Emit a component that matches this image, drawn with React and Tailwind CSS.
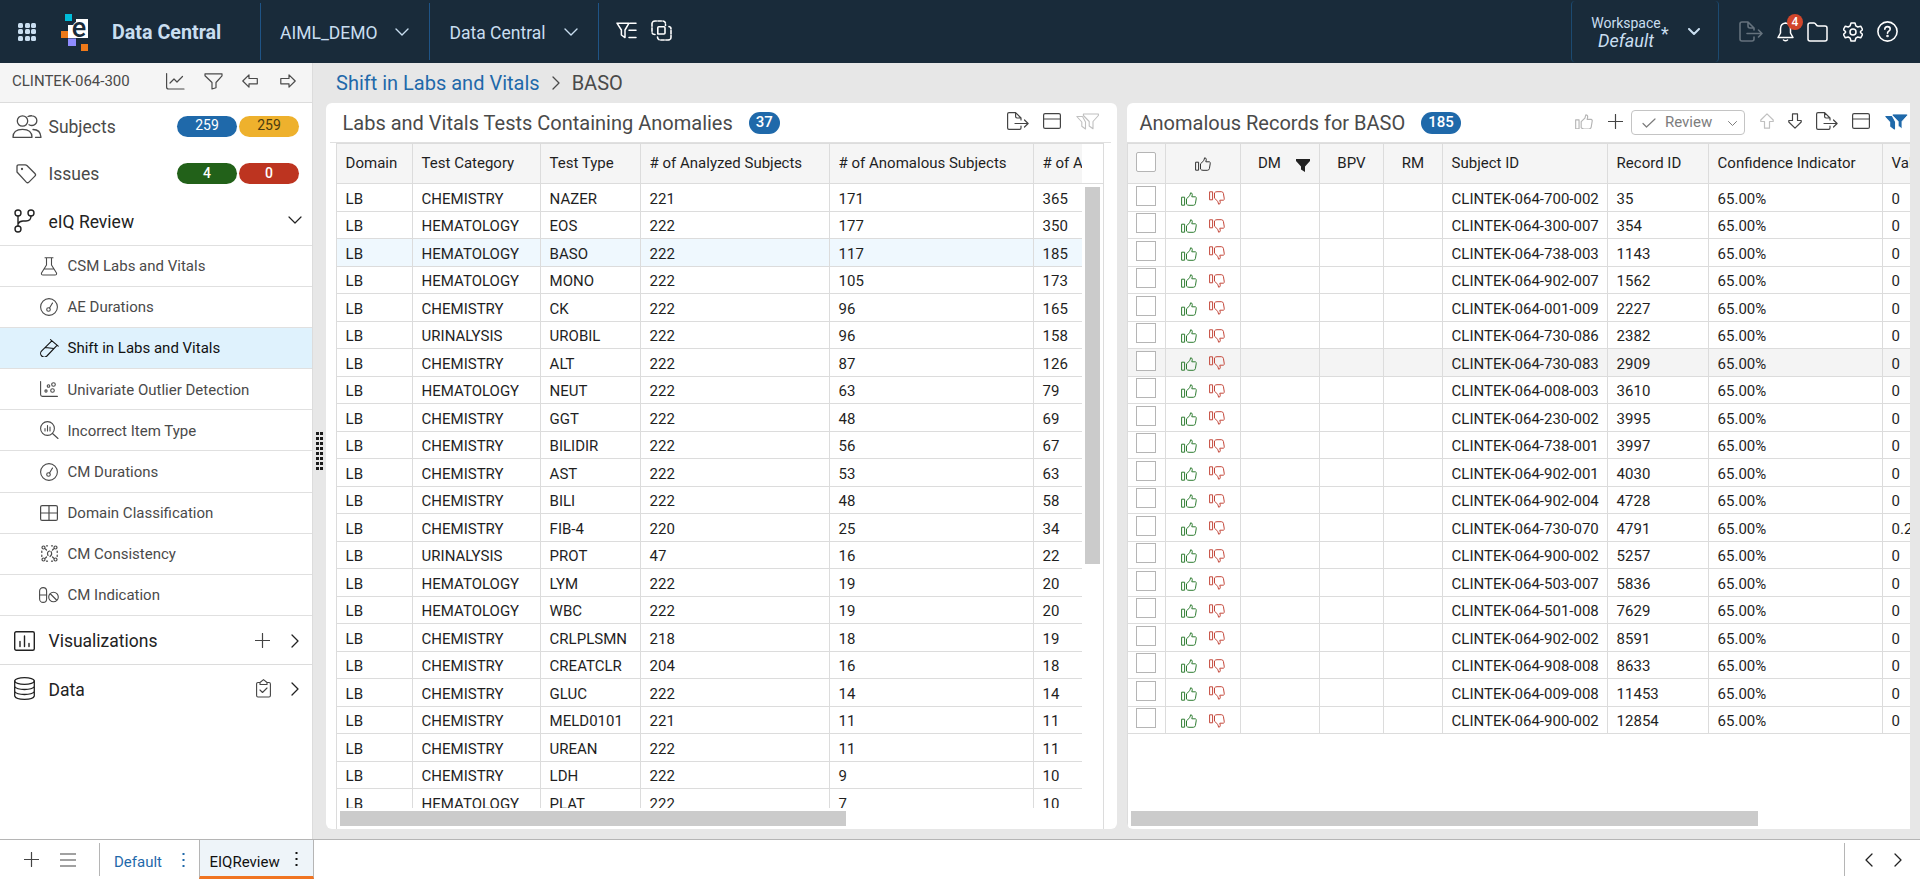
const subjects = [
    ['CHEMISTRY', 'NAZER', 221, 171, 365],
    ['HEMATOLOGY', 'EOS', 222, 177, 350],
    ['HEMATOLOGY', 'BASO', 222, 117, 185],
    ['HEMATOLOGY', 'MONO', 222, 105, 173],
    ['CHEMISTRY', 'CK', 222, 96, 165],
    ['URINALYSIS', 'UROBIL', 222, 96, 158],
    ['CHEMISTRY', 'ALT', 222, 87, 126],
    ['HEMATOLOGY', 'NEUT', 222, 63, 79],
    ['CHEMISTRY', 'GGT', 222, 48, 69],
    ['CHEMISTRY', 'BILIDIR', 222, 56, 67],
    ['CHEMISTRY', 'AST', 222, 53, 63],
    ['CHEMISTRY', 'BILI', 222, 48, 58],
    ['CHEMISTRY', 'FIB-4', 220, 25, 34],
    ['URINALYSIS', 'PROT', 47, 16, 22],
    ['HEMATOLOGY', 'LYM', 222, 19, 20],
    ['HEMATOLOGY', 'WBC', 222, 19, 20],
    ['CHEMISTRY', 'CRLPLSMN', 218, 18, 19],
    ['CHEMISTRY', 'CREATCLR', 204, 16, 18],
    ['CHEMISTRY', 'GLUC', 222, 14, 14],
    ['CHEMISTRY', 'MELD0101', 221, 11, 11],
    ['CHEMISTRY', 'UREAN', 222, 11, 11],
    ['CHEMISTRY', 'LDH', 222, 9, 10],
    ['HEMATOLOGY', 'PLAT', 222, 7, 10],
];

const records = [
    ['700-002', 35],
    ['300-007', 354],
    ['738-003', 1143],
    ['902-007', 1562],
    ['001-009', 2227],
    ['730-086', 2382],
    ['730-083', 2909],
    ['008-003', 3610],
    ['230-002', 3995],
    ['738-001', 3997],
    ['902-001', 4030],
    ['902-004', 4728],
    ['730-070', 4791, '0.25'],
    ['900-002', 5257],
    ['503-007', 5836],
    ['501-008', 7629],
    ['902-002', 8591],
    ['908-008', 8633],
    ['009-008', 11453],
    ['900-002', 12854],
];

const Icon = ({ w = 20, h = 20, className = '', sw = 1.2, children }) => (
    <svg
        width={w}
        height={h}
        viewBox={`0 0 ${w} ${h}`}
        fill="none"
        stroke="currentColor"
        strokeWidth={sw}
        strokeLinecap="round"
        strokeLinejoin="round"
        className={`shrink-0 ${className}`}
    >
        {children}
    </svg>
);

const ThumbUp = ({ w = 16, className }) => (
    <svg width={w} height={w * 0.875} viewBox="0 0 16 14" fill="none" stroke="currentColor" strokeWidth="1" strokeLinejoin="round" className={`shrink-0 ${className}`}>
        <path d="M.6 5.2h3v8h-3zM5.5 6.8 8.8 3.6 9.6.8q1.7 0 1.7 1.8L10.8 4.8h3.6q1.3.4.8 2L14.4 11.6q-.4 1.7-2 1.7H8q-1.6 0-2.5-1.2z" />
    </svg>
);

const ThumbDown = ({ w = 16, className }) => (
    <svg width={w} height={w * 0.875} viewBox="0 0 16 14" fill="none" stroke="currentColor" strokeWidth="1" strokeLinejoin="round" className={`shrink-0 ${className}`}>
        <path d="M.6.8h3v8h-3zM5.5 7.2 8.8 10.4 9.6 13.2q1.7 0 1.7-1.8L10.8 9.2h3.6q1.3-.4.8-2L14.4 2.4Q14 .7 12.4.7H8Q6.4.7 5.5 1.9z" />
    </svg>
);

const ChevronDown = ({ className, sw = 1.4 }) => (
    <Icon w={14} h={8} sw={sw} className={className}>
        <path d="M1 1l6 6 6-6" />
    </Icon>
);

const ChevronRight = ({ className }) => (
    <Icon w={8} h={14} sw={1.3} className={className}>
        <path d="M1 1l6 6-6 6" />
    </Icon>
);

const Plus = ({ className }) => (
    <Icon w={15} h={15} className={className}>
        <path d="M7.5.5v14M.5 7.5h14" />
    </Icon>
);

const ExportIcon = ({ className }) => (
    <Icon w={22} h={18} className={className}>
        <path d="M14 14v2q0 1.4-1.4 1.4H2Q.6 17.4.6 16V2Q.6.6 2 .6h6.6L14 6v2M8.6.8v3.8Q8.6 6 10 6h4M8 11.5h13M17.5 8l3.6 3.5-3.6 3.5" />
    </Icon>
);

const LayoutIcon = ({ className }) => (
    <Icon w={18} h={16} className={className}>
        <rect x=".6" y=".6" width="16.8" height="14.8" rx="1.5" />
        <path d="M.6 6h16.8" />
    </Icon>
);

const FiltersIcon = ({ className, fill = 'none' }) => (
    <svg width="23" height="17" viewBox="0 0 23 17" fill={fill} stroke="currentColor" strokeWidth="1.1" strokeLinejoin="round" className={`shrink-0 ${className}`}>
        <path d="M6.5 3.5H.8l5 5.5v4.2l3.7 2.8V9z" />
        <path d="M7.4 1h15v1.5L17 8.5v7.3l-3.8-2.8V8.5L7.4 2.5z" stroke={fill === 'none' ? 'currentColor' : '#fff'} strokeWidth={fill === 'none' ? 1.1 : 0.8} />
    </svg>
);

const AppHeader = () => (
    <header className="flex h-[63px] shrink-0 items-center bg-[#192b3a] text-[#c9def0]">
        <div className="ml-[18px] grid grid-cols-3 gap-[1.5px]">
            {Array.from({ length: 9 }, (_, i) => (
                <span key={i} className="size-[5px] rounded-[1.5px] bg-[#c9def0]" />
            ))}
        </div>
        <svg width="27" height="37" viewBox="0 0 27 37" className="ml-[25px] mt-[2px] shrink-0">
            <path d="M4 0h7v7H4z" fill="#00bcd9" />
            <path d="M15 5h12v19H7V11h8z" fill="#fff" />
            <path d="M0 17h7v7H0zM20 30h7v7h-7z" fill="#ef7a1a" />
            <path d="M7 24.5h8V32H7z" fill="#8f8cff" />
            <text x="18" y="23" textAnchor="middle" fontSize="27" fontWeight="500" fontFamily="Roboto, sans-serif" fill="#192b3a" stroke="#fff" strokeWidth="1.5" paintOrder="stroke">e</text>
        </svg>
        <span className="ml-6 w-[148px] pt-[3px] text-[19.7px] font-bold">Data Central</span>
        <div className="flex h-[57px] w-[169px] items-center justify-between border-l border-[#1f5486] pr-5 pl-[19px] text-[17.5px]">
            <span className="pt-[3px]">AIML_DEMO</span> <ChevronDown />
        </div>
        <div className="flex h-[57px] w-[169px] items-center justify-between border-l border-[#1f5486] pr-5 pl-[19.5px] text-[17.5px]">
            <span className="pt-[3px]">Data Central</span> <ChevronDown />
        </div>
        <div className="flex h-[57px] items-center border-l border-[#1f5486] pb-[2px] pl-[17px] text-white">
            <Icon w={21} h={17} sw={1.5}>
                <path d="M1 1.2h12L9 8v7.6L5.4 13V8zM14 1.2h6M13 8.2h7M13 15.6h7" />
            </Icon>
            <Icon w={21} h={21} sw={1.6} className="ml-[14px]">
                <path d="M4 14.5q-3 0-3-2.5V4q0-3 3-3h7.5q3 0 3 3v1.5" strokeDasharray="3.5 1.5" />
                <path d="M6.5 17q0 3 3 3H17q3 0 3-3V9q0-2.5-3-2.5" strokeDasharray="3.5 1.5" />
                <path d="M6.8 14V7.8q0-1 1-1H13q1 0 1 1V13q0 1-1 1z" />
            </Icon>
        </div>
        <div className="ml-auto flex h-[61px] w-[148px] items-center rounded border-x border-[#1c4a70] pl-[19px]">
            <div className="w-[70px] text-center leading-[17px]">
                <div className="text-[14px]">Workspace</div>
                <div className="text-[18px] italic">Default</div>
            </div>
            <span className="mt-[3px] w-[10px] text-[18px]">*</span>
            <Icon w={12} h={8} sw={2} className="ml-[17px]">
                <path d="M1 1l5 5 5-5" />
            </Icon>
        </div>
        <div className="flex items-center pr-[22px] pl-5 text-white">
            <Icon w={24} h={21} sw={1.6} className="text-[#65727d]">
                <path d="M15 16v2q0 2-2 2H3q-2 0-2-2V3q0-2 2-2h6l6 6v2M9 1v4q0 2 2 2h4M8 12.5h15M19.5 9l3.5 3.5-3.5 3.5" />
            </Icon>
            <div className="relative ml-[14px]">
                <Icon w={17} h={20} sw={1.5}>
                    <path d="M8.5 1Q3.5 1.5 3.5 7v4L1 15.5h15L13.5 11V7Q13.5 1.5 8.5 1zM6.5 18q2 1.5 4 0" />
                </Icon>
                <span className="absolute -top-[8px] left-[10px] flex size-4 items-center justify-center rounded-full bg-[#d1462b] text-[12px] font-medium">4</span>
            </div>
            <Icon w={21} h={20} sw={1.5} className="ml-[13px]">
                <path d="M1 3q0-2 2-2h4q1 0 2 1.5T11.5 4H18q2 0 2 2v11q0 2-2 2H3q-2 0-2-2z" />
            </Icon>
            <Icon w={20} h={20} sw={1.5} className="ml-[15px]">
                <path d="M8 1h4l.8 2.8 2 1.2 2.9-.8 1.9 3.3L17.5 9.5v1l2.1 2-1.9 3.3-2.9-.8-2 1.2L12 19H8l-.8-2.8-2-1.2-2.9.8L.4 12.5l2.1-2v-1l-2.1-2 1.9-3.3 2.9.8 2-1.2z" />
                <circle cx="10" cy="10" r="3" />
            </Icon>
            <Icon w={21} h={21} sw={1.6} className="ml-[14px]">
                <circle cx="10.5" cy="10.5" r="9.6" />
                <path d="M7.8 8.3q0-2.7 2.7-2.7t2.7 2.4q0 1.3-1.4 2.2t-1.3 2.1" />
                <circle cx="10.5" cy="15" r=".5" />
            </Icon>
        </div>
    </header>
);

const gauge = (
    <Icon w={18} h={18} sw={1.1}>
        <circle cx="9" cy="9" r="8.4" />
        <circle cx="8.5" cy="11.5" r="1.8" />
        <path d="M12.5 5 9.5 10" />
    </Icon>
);

const reviewItems = [
    {
        label: 'CSM Labs and Vitals',
        icon: (
            <Icon w={18} h={19} sw={1.1}>
                <path d="M5 .8h8M6.5 1v7L1.5 16q-.5 2 1.5 2h12q2 0 1.5-2l-5-8V1M4 12h10" />
            </Icon>
        ),
    },
    { label: 'AE Durations', icon: gauge },
    {
        label: 'Shift in Labs and Vitals',
        active: true,
        icon: (
            <Icon w={19} h={18} sw={1.1}>
                <path d="M10.5.6l7.7 6.6M11.8 1.8 1.7 11.8a3.6 3.6 0 0 0 5.2 5.2L17 6.3M5.3 8.5l8.7 1" />
            </Icon>
        ),
    },
    {
        label: 'Univariate Outlier Detection',
        icon: (
            <Icon w={18} h={16} sw={1.1}>
                <path d="M.6.6v13q0 1.8 1.8 1.8h15" />
                <circle cx="8.5" cy="5" r="1.3" />
                <circle cx="13.5" cy="3.5" r="1.8" />
                <circle cx="6" cy="10" r="1.1" />
                <circle cx="12.5" cy="9.5" r="1.8" />
            </Icon>
        ),
    },
    {
        label: 'Incorrect Item Type',
        icon: (
            <Icon w={19} h={18} sw={1.1}>
                <circle cx="7.5" cy="7.5" r="6.9" />
                <path d="M12.5 12.5l5.5 5M5 7.5V10M7.5 4.5V10M10 6v4" />
            </Icon>
        ),
    },
    { label: 'CM Durations', icon: gauge },
    {
        label: 'Domain Classification',
        icon: (
            <Icon w={18} h={16} sw={1.2}>
                <rect x=".6" y=".6" width="16.8" height="14.8" rx="1.5" />
                <path d="M9 .6v14.8M.6 8h16.8" />
            </Icon>
        ),
    },
    {
        label: 'CM Consistency',
        icon: (
            <Icon w={17} h={17} sw={1.2}>
                <circle cx="2.5" cy="2.5" r="1.5" />
                <circle cx="14.5" cy="2.5" r="1.5" />
                <circle cx="2.5" cy="14.5" r="1.5" />
                <circle cx="14.5" cy="14.5" r="1.5" />
                <path d="M.8 6v1.5M16.2 6v1.5M.8 10v1.5M16.2 10v1.5M5.5.8h1M10.5.8h1M5.5 16.2h1M10.5 16.2h1M4.5 4 5.5 5M12.5 4 11.5 5M4.5 13 5.5 12M12.5 13 11.5 12M7 10.5Q5.5 7 8.5 6M10 6.5q1.7 3-1 5" />
            </Icon>
        ),
    },
    {
        label: 'CM Indication',
        icon: (
            <Icon w={20} h={16} sw={1.1}>
                <rect x=".6" y=".6" width="7" height="14.8" rx="3.5" />
                <path d="M.6 8h7M11.5 7l6 6" />
                <circle cx="14.5" cy="10" r="4.8" />
            </Icon>
        ),
    },
];

const Pill = ({ className, children }) => (
    <span className={`flex h-[21px] w-[60px] items-center justify-center rounded-full text-[14px] ${className}`}>{children}</span>
);

const Sidebar = () => (
    <aside className="w-[313px] shrink-0 border-r border-[#dcdcdc] bg-white text-[#4a4a4a]">
        <div className="flex h-10 items-center border-b border-[#dcdcdc] bg-[#f5f5f5] pb-[3px] pl-3">
            <span className="w-[154px] pt-px text-[15px]">CLINTEK-064-300</span>
            <Icon w={19} h={17}>
                <path d="M.6.6v13.4q0 2 2 2H18M4 10l4-4 3 3 5.5-5.5" />
            </Icon>
            <Icon w={19} h={17} className="ml-[19px]">
                <path d="M1 .8h17v2L12 9.500v5.300L8 16V9.500L1 2.800z" />
            </Icon>
            <Icon w={16} h={14} className="ml-[19px]">
                <path d="M7 .8.8 7 7 13.200V9.800h8.300V4.500H7z" />
            </Icon>
            <Icon w={16} h={14} className="ml-[22px]">
                <path d="M9 .8 15.200 7 9 13.200V9.800H.8V4.500H9z" />
            </Icon>
        </div>
        <div className="flex h-[47px] items-center pr-[13px] pl-3">
            <Icon w={30} h={23} sw={1.3}>
                <circle cx="10.5" cy="6" r="5.2" />
                <path d="M16 1.5q2-.9 4-.7a4.8 4.8 0 0 1 0 9.7q-1.5 0-3-.8M1 22.3q0-8 9.5-8t9.5 8zM21 14.5q7.5 0 8 7.8h-5.5" />
            </Icon>
            <span className="ml-[6.5px] pt-px text-[17.5px]">Subjects</span>
            <Pill className="ml-auto bg-[#1f69aa] pb-[2px] text-white">259</Pill>
            <Pill className="ml-[2px] bg-[#eeb12d] pb-[2px] text-[#4a3c10]">259</Pill>
        </div>
        <div className="flex h-[47px] items-center pr-[13px] pl-4">
            <Icon w={21} h={20} sw={1.3}>
                <path d="M1 8V2.5Q1 .8 2.7.8h6.5q1 0 1.7.7l8 8q1.3 1.3 0 2.6l-6 6q-1.3 1.3-2.6 0z" />
                <circle cx="6" cy="5" r=".5" />
            </Icon>
            <span className="ml-[11.5px] pt-[2px] text-[17.5px]">Issues</span>
            <Pill className="ml-auto bg-[#226119] font-medium text-white">4</Pill>
            <Pill className="ml-[2px] bg-[#bd3420] font-medium text-white">0</Pill>
        </div>
        <div className="flex h-[49px] items-center border-b border-[#e0e0e0] pr-[9px] pl-[14px] text-[#222]">
            <Icon w={21} h={24} sw={1.4}>
                <circle cx="4" cy="4" r="3" />
                <circle cx="17" cy="4" r="3" />
                <circle cx="4" cy="20" r="3" />
                <path d="M4 7v10M17 7q0 5-5 5H9q-3.5 0-5 3" />
            </Icon>
            <span className="ml-[13.5px] pt-[2px] text-[17.5px]">eIQ Review</span>
            <ChevronDown className="mr-px mb-[2px] ml-auto" sw={1.2} />
        </div>
        {reviewItems.map((item) => (
            <div
                key={item.label}
                className={`flex h-[41.1px] items-center border-b border-[#e0e0e0] ${item.active ? 'bg-[#dff2fd] text-[#111]' : ''}`}
            >
                <span className="ml-[37px] flex w-6 justify-center">{item.icon}</span>
                <span className="ml-[6.5px] pt-px text-[15px]">{item.label}</span>
            </div>
        ))}
        <div className="flex h-[49.5px] items-center border-b border-[#dcdcdc] pt-px pr-[13px] pl-[14px] text-[#222]">
            <Icon w={21} h={20} sw={1.4}>
                <rect x=".7" y=".7" width="19.6" height="18.6" rx="1.5" />
                <path d="M6 10.500v5M10.500 5v10.500M15 12.500v3" />
            </Icon>
            <span className="ml-[13.5px] pt-[2px] text-[17.5px]">Visualizations</span>
            <Plus className="ml-auto text-[#444]" />
            <ChevronRight className="ml-[21px]" />
        </div>
        <div className="flex h-[47px] items-center pr-[13px] pl-[14px] text-[#222]">
            <Icon w={21} h={23} sw={1.3}>
                <ellipse cx="10.5" cy="4" rx="9.8" ry="3.3" />
                <path d="M.7 4v15q1 3.3 9.8 3.3t9.8-3.3V4M.7 9.5q2 3 9.8 3t9.8-3M.7 14.5q2 3 9.8 3t9.8-3" />
            </Icon>
            <span className="ml-[13.5px] pt-[3px] text-[17.5px]">Data</span>
            <Icon w={15} h={19} sw={1.1} className="ml-auto text-[#444]">
                <path d="M4 3.5H2Q.6 3.5.6 5v11.5Q.6 18 2 18h11q1.4 0 1.4-1.5V5q0-1.5-1.4-1.5h-2M4 5.5V3.5L7.5.6 11 3.5v2zM4 11l2.5 2.5L11 9" />
            </Icon>
            <ChevronRight className="ml-[20px]" />
        </div>
    </aside>
);

const Splitter = () => (
    <div className="w-[13px] shrink-0 pt-[369px] pl-[3px]">
        <div className="grid w-[7px] grid-cols-2 gap-x-px gap-y-[2px]">
            {Array.from({ length: 16 }, (_, i) => (
                <span key={i} className="size-[3px] bg-[#1a1a1a]" />
            ))}
        </div>
    </div>
);

const Count = ({ children }) => (
    <span className="ml-4 flex h-[22px] items-center rounded-full bg-[#1f69aa] px-[7px] text-[15px] font-medium text-white">{children}</span>
);

const head = 'flex shrink-0 items-center border-r border-[#dcdcdc] pl-[8.6px] whitespace-nowrap';
const cell = 'flex shrink-0 items-center border-r border-[#dcdcdc] pt-[3px] pl-[8.6px] whitespace-nowrap';
const checkCell = 'flex w-[38px] shrink-0 items-center border-r border-[#dcdcdc] pl-2';

const TestsPanel = () => (
    <section className="flex w-[791px] shrink-0 flex-col overflow-hidden rounded-md bg-white">
        <div className="ml-1 flex h-10 w-[781px] items-center border-b border-[#e0e0e0] pr-3 pl-[12.5px]">
            <h2 className="text-[20px] text-[#4a4a4a]">Labs and Vitals Tests Containing Anomalies</h2>
            <Count>37</Count>
            <ExportIcon className="mb-[3px] ml-auto text-[#444]" />
            <LayoutIcon className="mb-[3px] ml-[14px] text-[#444]" />
            <FiltersIcon className="mb-[3px] ml-[15px] text-[#c0c0c0]" />
        </div>
        <div className="ml-[10px] flex min-h-0 w-[768px] flex-1 flex-col border-x border-t border-[#dcdcdc] text-[15px] text-[#1f1f1f]">
            <div className="h-10 shrink-0 border-b border-[#dcdcdc]">
                <div className="flex h-full w-[745px] overflow-hidden bg-[#f5f5f5]">
                    <div className={`${head} w-[76px]`}>Domain</div>
                    <div className={`${head} w-[128px]`}>Test Category</div>
                    <div className={`${head} w-[100px]`}>Test Type</div>
                    <div className={`${head} w-[189px]`}># of Analyzed Subjects</div>
                    <div className={`${head} w-[204px]`}># of Anomalous Subjects</div>
                    <div className={`${head} w-[204px]`}># of Anomalies</div>
                </div>
            </div>
            <div className="flex h-[624px] shrink-0">
                <div className="w-[745px] overflow-hidden">
                    {subjects.map(([category, type, analyzed, anomalous, anomalies]) => (
                        <div key={type} className={`flex h-[27.5px] border-b border-[#dcdcdc] ${type === 'BASO' ? 'bg-[#eff8fe]' : ''}`}>
                            <div className={`${cell} w-[76px]`}>LB</div>
                            <div className={`${cell} w-[128px]`}>{category}</div>
                            <div className={`${cell} w-[100px]`}>{type}</div>
                            <div className={`${cell} w-[189px]`}>{analyzed}</div>
                            <div className={`${cell} w-[204px]`}>{anomalous}</div>
                            <div className={`${cell} w-[204px]`}>{anomalies}</div>
                        </div>
                    ))}
                </div>
                <div className="mt-[3px] ml-[3px] h-[377px] w-[15px] bg-[#cbcbcb]" />
            </div>
            <div className="mt-[3px] ml-[3px] h-[15px] w-[506px] bg-[#cbcbcb]" />
        </div>
    </section>
);

const RecordsPanel = () => (
    <section className="ml-[10px] flex w-[783px] shrink-0 flex-col overflow-hidden rounded-l-md bg-white">
        <div className="flex h-10 items-center border-b border-[#e0e0e0] pr-[2px] pl-[12.5px]">
            <h2 className="text-[20px] text-[#4a4a4a]">Anomalous Records for BASO</h2>
            <Count>185</Count>
            <ThumbUp w={18} className="mb-[2px] ml-auto text-[#b5b5b5]" />
            <Plus className="mb-[3px] ml-[15px] text-[#444]" />
            <div className="ml-[8px] flex h-[25px] w-[114px] items-center rounded border border-[#c4c4c4] text-[15px] text-[#7d7d7d]">
                <Icon w={14} h={10} className="ml-[10px]">
                    <path d="M1 5.5 4.5 9 13 1" />
                </Icon>
                <span className="ml-[9px]">Review</span>
                <Icon w={9} h={5} sw={1} className="ml-[16px] mt-[2px]">
                    <path d="M.5.5l4 4 4-4" />
                </Icon>
            </div>
            <Icon w={14} h={16} className="mb-[3px] ml-[15px] text-[#c0c0c0]">
                <path d="M7 .8.8 7v1.5h3.7v6.7h5V8.5h3.7V7z" />
            </Icon>
            <Icon w={14} h={16} className="mb-[3px] ml-[14px] text-[#444]">
                <path d="M7 15.2.8 9V7.5h3.7V.8h5v6.7h3.7V9z" />
            </Icon>
            <ExportIcon className="mb-[3px] ml-[14px] text-[#444]" />
            <LayoutIcon className="mb-[3px] ml-[14px] text-[#444]" />
            <FiltersIcon className="mb-[3px] ml-[15px] text-[#1f69aa]" fill="currentColor" />
        </div>
        <div className="flex min-h-0 flex-1 flex-col overflow-hidden border-l border-t border-[#dcdcdc] text-[15px] text-[#1f1f1f]">
            <div className="flex h-10 shrink-0 border-b border-[#dcdcdc] bg-[#f5f5f5]">
                <div className={checkCell}>
                    <span className="mb-[3px] size-5 rounded-[2px] border border-[#b5b5b5] bg-white" />
                </div>
                <div className="flex w-[75px] shrink-0 items-center justify-center border-r border-[#dcdcdc]">
                    <ThumbUp className="text-[#333]" />
                </div>
                <div className="flex w-[79px] shrink-0 items-center border-r border-[#dcdcdc] pl-[17px]">
                    DM
                    <svg width="14" height="13" viewBox="0 0 14 13" className="mt-1 ml-[15px]" fill="#222">
                        <path d="M0 0h14v2L9 7.5V13L5 10.5v-3L0 2z" />
                    </svg>
                </div>
                <div className="flex w-[64px] shrink-0 items-center justify-center border-r border-[#dcdcdc]">BPV</div>
                <div className="flex w-[59px] shrink-0 items-center justify-center border-r border-[#dcdcdc]">RM</div>
                <div className={`${head} w-[165px]`}>Subject ID</div>
                <div className={`${head} w-[101px]`}>Record ID</div>
                <div className={`${head} w-[174px]`}>Confidence Indicator</div>
                <div className={`${head} w-[100px]`}>Value</div>
            </div>
            <div className="h-[624px] shrink-0 overflow-hidden">
                {records.map(([id, record, value = '0']) => (
                    <div key={record} className={`flex h-[27.5px] border-b border-[#dcdcdc] ${record === 2909 ? 'bg-[#f4f4f4]' : ''}`}>
                        <div className={checkCell}>
                            <span className="mb-[3px] size-5 border border-[#b5b5b5] bg-white" />
                        </div>
                        <div className="flex w-[75px] shrink-0 items-center border-r border-[#dcdcdc] pt-[2px] pl-[15px]">
                            <ThumbUp className="mt-px text-[#2f7d32]" />
                            <ThumbDown className="ml-3 text-[#c4473a]" />
                        </div>
                        <div className={`${cell} w-[79px]`} />
                        <div className={`${cell} w-[64px]`} />
                        <div className={`${cell} w-[59px]`} />
                        <div className={`${cell} w-[165px]`}>CLINTEK-064-{id}</div>
                        <div className={`${cell} w-[101px]`}>{record}</div>
                        <div className={`${cell} w-[174px]`}>65.00%</div>
                        <div className={`${cell} w-[100px]`}>{value}</div>
                    </div>
                ))}
            </div>
            <div className="mt-[3px] ml-[3px] h-[15px] w-[627px] shrink-0 bg-[#cbcbcb]" />
        </div>
    </section>
);

const Dots = ({ className }) => (
    <svg width="3" height="14" viewBox="0 0 3 14" fill="currentColor" className={className}>
        <path d="M.5 0h2v2h-2zM.5 6h2v2h-2zM.5 12h2v2h-2z" />
    </svg>
);

const Footer = () => (
    <footer className="flex h-10 shrink-0 items-center border-t border-[#b5b5b5] bg-white text-[15px]">
        <Plus className="ml-6 text-[#444]" />
        <Icon w={16} h={14} className="ml-[21px] text-[#444]">
            <path d="M0 1h16M0 7h16M0 13h16" />
        </Icon>
        <div className="ml-[23px] h-[33px] w-px bg-[#b5b5b5]" />
        <span className="ml-[14px] pt-[5px] text-[#1f69aa]">Default</span>
        <Dots className="ml-5 text-[#1f69aa]" />
        <div className="ml-[14px] flex h-full w-[115px] items-center border-x border-b-[3px] border-x-[#b5b5b5] border-b-[#f07422] bg-[#eef4f9] pl-[9.5px] text-[#111]">
            <span className="pt-[8px]">EIQReview</span>
            <Dots className="ml-[15px] mt-px" />
        </div>
        <div className="ml-auto h-[33px] w-px bg-[#b5b5b5]" />
        <Icon w={8} h={14} sw={1.3} className="ml-5 text-[#222]">
            <path d="M7 1 1 7l6 6" />
        </Icon>
        <ChevronRight className="mr-[18px] ml-[21px] text-[#222]" />
    </footer>
);

const App = () => (
    <div className="flex h-[879px] w-[1920px] flex-col overflow-hidden bg-[#e7e7e7] font-['Roboto',sans-serif]">
        <AppHeader />
        <div className="flex min-h-0 flex-1">
            <Sidebar />
            <Splitter />
            <main className="flex min-w-0 flex-1 flex-col pb-[10px]">
                <nav className="flex h-10 shrink-0 items-center pb-px pl-[10px] text-[20px] text-[#4a4a4a]">
                    <span className="text-[#1f69aa]">Shift in Labs and Vitals</span>
                    <ChevronRight className="mx-3" />
                    BASO
                </nav>
                <div className="flex min-h-0 flex-1">
                    <TestsPanel />
                    <RecordsPanel />
                </div>
            </main>
        </div>
        <Footer />
    </div>
);

export default App;
